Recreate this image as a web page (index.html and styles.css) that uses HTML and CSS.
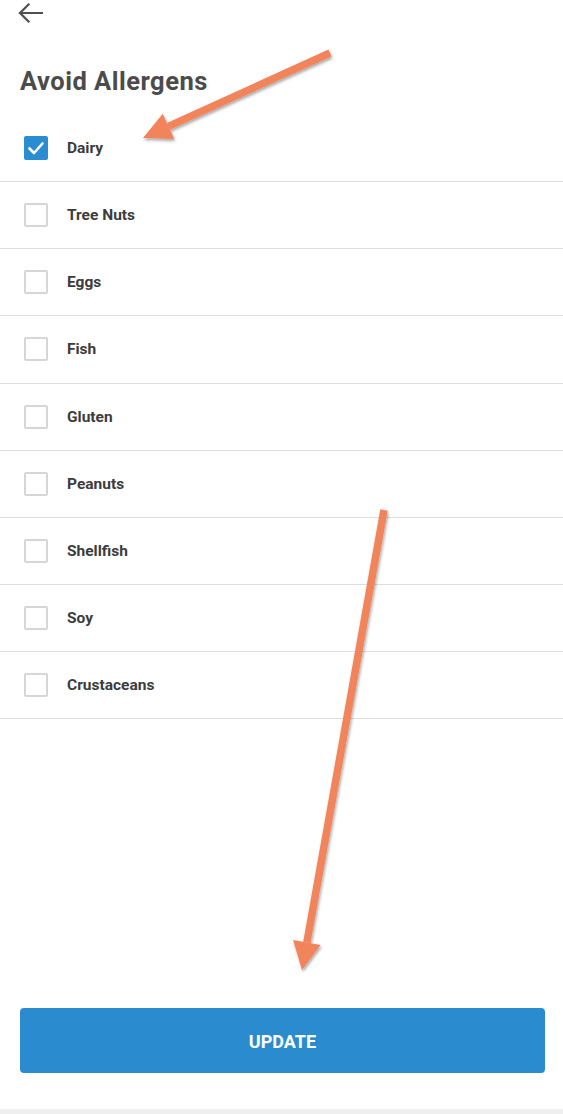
FILE: index.html
```html
<!DOCTYPE html>
<html lang="en">
<head>
<meta charset="utf-8">
<title>Avoid Allergens</title>
<link rel="stylesheet" href="styles.css">
</head>
<body>
<div class="page">
  <header class="topbar">
    <button class="back" aria-label="Back">
      <svg width="26" height="22" viewBox="0 0 26 22" aria-hidden="true">
        <path d="M3 11H25M11.5 2.5L3 11L11.5 19.5" fill="none" stroke="#4f4f4f" stroke-width="2.2" stroke-linecap="square" stroke-linejoin="miter"/>
      </svg>
    </button>
  </header>

  <h1 class="title">Avoid Allergens</h1>

  <ul class="list">
    <li class="row"><span class="box checked"><svg width="24" height="24" viewBox="0 0 24 24" aria-hidden="true"><path d="M5.5 12.5L10 17L18.5 7.5" fill="none" stroke="#fff" stroke-width="2.6" stroke-linecap="round" stroke-linejoin="round"/></svg></span><span class="label">Dairy</span></li>
    <li class="row"><span class="box"></span><span class="label">Tree Nuts</span></li>
    <li class="row"><span class="box"></span><span class="label">Eggs</span></li>
    <li class="row"><span class="box"></span><span class="label">Fish</span></li>
    <li class="row"><span class="box"></span><span class="label">Gluten</span></li>
    <li class="row"><span class="box"></span><span class="label">Peanuts</span></li>
    <li class="row"><span class="box"></span><span class="label">Shellfish</span></li>
    <li class="row"><span class="box"></span><span class="label">Soy</span></li>
    <li class="row"><span class="box"></span><span class="label">Crustaceans</span></li>
  </ul>

  <div class="spacer"></div>

  <div class="footer">
    <button class="update">UPDATE</button>
  </div>
  <div class="navstrip"></div>

  <svg class="annotations" width="563" height="1114" viewBox="0 0 563 1114" aria-hidden="true">
    <defs>
      <filter id="shadow" x="-20%" y="-20%" width="140%" height="140%">
        <feDropShadow dx="1" dy="2" stdDeviation="1.6" flood-color="#000" flood-opacity="0.35"/>
      </filter>
    </defs>
    <g filter="url(#shadow)" fill="#f2845b" stroke="none">
      <line x1="330" y1="53" x2="168.5" y2="126.4" stroke="#f2845b" stroke-width="7.5"/>
      <polygon points="143,138 174.3,139.1 162.7,113.7"/>
      <line x1="384" y1="510" x2="306.9" y2="942.4" stroke="#f2845b" stroke-width="7.5"/>
      <polygon points="302,970 320.7,944.9 293.1,939.9"/>
    </g>
  </svg>
</div>
</body>
</html>
```

FILE: styles.css
```css
* { box-sizing: border-box; }

html, body {
  margin: 0;
  padding: 0;
  background: #ffffff;
}

body {
  font-family: Roboto, "Noto Sans", "Liberation Sans", sans-serif;
}

.page {
  position: relative;
  min-height: 100vh;
  display: flex;
  flex-direction: column;
}

.topbar {
  height: 26px;
  display: flex;
  align-items: center;
  padding-left: 17px;
}

.back {
  display: flex;
  border: 0;
  padding: 0;
  background: none;
}

.title {
  margin: 40px 0 19px;
  padding-left: 20px;
  height: 30px;
  font-size: 25.5px;
  line-height: 30px;
  font-weight: 700;
  letter-spacing: 0.5px;
  color: #4b4b4b;
}

.list {
  list-style: none;
  margin: 0;
  padding: 0;
}

.row {
  height: 67.125px;
  display: flex;
  align-items: center;
  gap: 19px;
  padding-left: 24px;
  border-bottom: 1px solid #dddddd;
}

.box {
  width: 24px;
  height: 24px;
  border: 2px solid #d6d6d6;
  border-radius: 2px;
  display: flex;
  align-items: center;
  justify-content: center;
  flex: none;
}

.box.checked {
  background: #2b8dd1;
  border-color: #2b8dd1;
}

.box.checked svg {
  flex: none;
}

.label {
  font-size: 15.5px;
  font-weight: 700;
  color: #3c3c3c;
}

.spacer {
  flex: 1;
}

.footer {
  padding: 0 18px 36px 20px;
}

.update {
  display: block;
  width: 100%;
  height: 65px;
  border: 0;
  border-radius: 4px;
  background: #2a8ccf;
  color: #ffffff;
  font-family: Roboto, "Noto Sans", "Liberation Sans", sans-serif;
  font-size: 18px;
  font-weight: 700;
  letter-spacing: 0;
  padding-top: 2px;
}

.navstrip {
  height: 5px;
  background: #efefef;
}

.annotations {
  position: absolute;
  left: 0;
  top: 0;
  pointer-events: none;
}
```
